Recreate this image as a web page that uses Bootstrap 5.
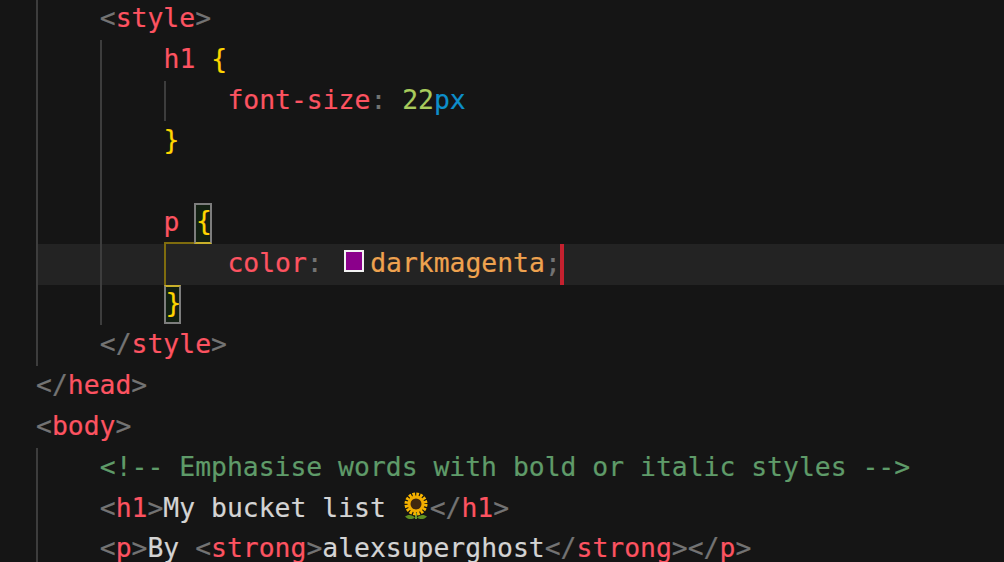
<!DOCTYPE html>
<html lang="en">
<head>
<meta charset="utf-8">
<title>Editor</title>
<link href="https://cdn.jsdelivr.net/npm/bootstrap@5.3.0/dist/css/bootstrap.min.css" rel="stylesheet">
<style>
  html, body { background: #151515; height: 100%; overflow: hidden; }
  .ed-pane { height: 563px; overflow: hidden; margin-top: -1px; background: #151515;
    font-family: "DejaVu Sans Mono", "Liberation Mono", monospace; font-size: 26.4px; color: #d4d4d4; -webkit-text-stroke: 0.2px; }
  .ed-line { height: 40.8px; line-height: 37.6px; padding-left: 36px; white-space: pre; }
  .ed-current { background: #232323; background-clip: content-box; }
  .ed-ind { width: 63.8px; flex: none; border-left: 2px solid transparent; }
  .ed-guide { border-left-color: #3d3d3d; }
  .ed-gold { border-left-color: #7f6c0e; }
  .ed-run { flex: none; }
  .t-p { color: #737373; }
  .t-r { color: #fd5361; }
  .t-y { color: #ffd600; }
  .t-g { color: #a8cb5c; }
  .t-b { color: #0d8fcb; }
  .t-o { color: #eea24f; }
  .t-c { color: #5f9b69; }
  .br-head { width: 30.5px; flex: none; border-bottom: 2px solid #7f6c0e; box-sizing: border-box; }
  .br-box { flex: none; box-sizing: border-box; background: #122012; border: 2px solid #7d7d7d; line-height: 31.6px; overflow: hidden; }
  .br-open { width: 18px; height: 40.8px; border-bottom-color: #c9b02a; padding-left: 0; }
  .br-close { width: 17px; height: 39px; border-top-color: #c9b02a; }
  .cswatch { flex: none; width: 20px; height: 22px; margin: 6px 6px 0 5.5px; background: #8b008b; border: 2px solid #f2f2f2; box-sizing: border-box; }
  .ed-caret { flex: none; width: 4px; height: 100%; background: #c4212f; margin-left: -0.8px; }
  .ed-emoji { flex: none; width: 28px; height: 40px; }
</style>
</head>
<body>
<main class="ed-pane">
  <div class="ed-line d-flex"><span class="ed-ind ed-guide"></span><span class="ed-run"><span class="t-p">&lt;</span><span class="t-r">style</span><span class="t-p">&gt;</span></span></div>
  <div class="ed-line d-flex"><span class="ed-ind ed-guide"></span><span class="ed-ind ed-guide"></span><span class="ed-run"><span class="t-r">h1 </span><span class="t-y">{</span></span></div>
  <div class="ed-line d-flex"><span class="ed-ind ed-guide"></span><span class="ed-ind ed-guide"></span><span class="ed-ind ed-guide"></span><span class="ed-run"><span class="t-r">font-size</span><span class="t-p">: </span><span class="t-g">22</span><span class="t-b">px</span></span></div>
  <div class="ed-line d-flex"><span class="ed-ind ed-guide"></span><span class="ed-ind ed-guide"></span><span class="ed-run t-y">}</span></div>
  <div class="ed-line d-flex"><span class="ed-ind ed-guide"></span><span class="ed-ind ed-guide"></span></div>
  <div class="ed-line d-flex"><span class="ed-ind ed-guide"></span><span class="ed-ind ed-guide"></span><span class="br-head t-r">p </span><span class="br-box br-open t-y">{</span></div>
  <div class="ed-line ed-current d-flex"><span class="ed-ind ed-guide"></span><span class="ed-ind ed-guide"></span><span class="ed-ind ed-gold"></span><span class="ed-run"><span class="t-r">color</span><span class="t-p">: </span></span><span class="cswatch"></span><span class="ed-run"><span class="t-o">darkmagenta</span><span class="t-p">;</span></span><span class="ed-caret"></span></div>
  <div class="ed-line d-flex"><span class="ed-ind ed-guide"></span><span class="ed-ind ed-guide"></span><span class="br-box br-close t-y">}</span></div>
  <div class="ed-line d-flex"><span class="ed-ind ed-guide"></span><span class="ed-run"><span class="t-p">&lt;/</span><span class="t-r">style</span><span class="t-p">&gt;</span></span></div>
  <div class="ed-line d-flex"><span class="ed-run"><span class="t-p">&lt;/</span><span class="t-r">head</span><span class="t-p">&gt;</span></span></div>
  <div class="ed-line d-flex"><span class="ed-run"><span class="t-p">&lt;</span><span class="t-r">body</span><span class="t-p">&gt;</span></span></div>
  <div class="ed-line d-flex"><span class="ed-ind ed-guide"></span><span class="ed-run t-c">&lt;!-- Emphasise words with bold or italic styles --&gt;</span></div>
  <div class="ed-line d-flex"><span class="ed-ind ed-guide"></span><span class="ed-run"><span class="t-p">&lt;</span><span class="t-r">h1</span><span class="t-p">&gt;</span>My bucket list </span>
    <svg class="ed-emoji" viewBox="0 0 28 40" aria-hidden="true">
      <path d="M14 24v6" stroke="#6f9a2c" stroke-width="2"/>
      <path d="M13 28.5c-2.500-3-7-3.500-10-1 2.500 3 7 3.500 10 1zM15 28.500c2.500-3 7-3.500 10-1-2.500 3-7 3.500-10 1z" fill="#5f8f22"/>
      <circle cx="14" cy="15" r="9.500" fill="none" stroke="#f7b500" stroke-width="4" stroke-dasharray="2.600 1.130"/>
      <circle cx="14" cy="15" r="8.500" fill="#f2ad00"/>
      <circle cx="14" cy="15" r="5.500" fill="#40280f"/>
    </svg>
    <span class="ed-run"><span class="t-p">&lt;/</span><span class="t-r">h1</span><span class="t-p">&gt;</span></span></div>
  <div class="ed-line d-flex"><span class="ed-ind ed-guide"></span><span class="ed-run"><span class="t-p">&lt;</span><span class="t-r">p</span><span class="t-p">&gt;</span>By <span class="t-p">&lt;</span><span class="t-r">strong</span><span class="t-p">&gt;</span>alexsuperghost<span class="t-p">&lt;/</span><span class="t-r">strong</span><span class="t-p">&gt;&lt;/</span><span class="t-r">p</span><span class="t-p">&gt;</span></span></div>
</main>
<script src="https://cdn.jsdelivr.net/npm/bootstrap@5.3.0/dist/js/bootstrap.bundle.min.js"></script>
</body>
</html>
